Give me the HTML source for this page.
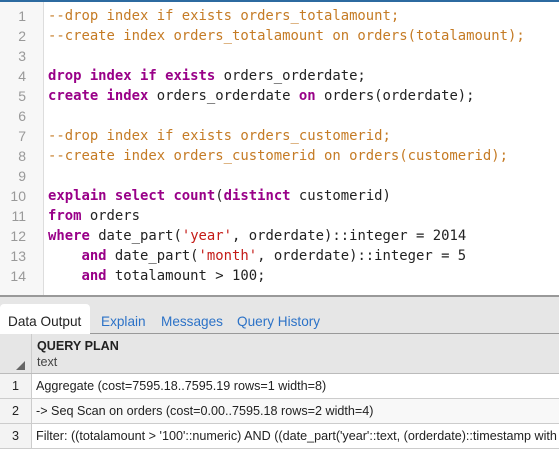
<!DOCTYPE html>
<html><head><style>
body{margin:0;width:559px;height:450px;overflow:hidden;background:#fff;position:relative;font-family:"Liberation Sans",sans-serif}
.top{position:absolute;left:0;top:0;width:559px;height:2px;background:#2c6aa0}
.gut{position:absolute;left:0;top:2px;width:43px;height:293px;background:#f7f7f7;border-right:1px solid #ddd}
.code{position:absolute;left:0;top:6px;font-family:"DejaVu Sans Mono",monospace;font-size:13.9px}
.code div{height:20px;line-height:20px;overflow:hidden;white-space:pre}
.ln{display:inline-block;width:26px;text-align:right;color:#999;margin-right:22px;font-family:"Liberation Sans",sans-serif;font-size:14px;vertical-align:top}
.c{color:#c57b25}.k{color:#990088;font-weight:bold}.s{color:#c41a16}.t{color:#222}
.band{position:absolute;left:0;top:295px;width:559px;height:39px;background:#e6e6e6;border-top:2px solid #999;box-sizing:border-box;border-bottom:1px solid #999}
.tab{position:absolute;top:314px;font-size:13.6px;color:#2c72c7}
.tab0{position:absolute;left:0;top:304px;width:90px;height:30px;background:#fff;border-radius:4px 4px 0 0}
.hdr{position:absolute;left:0;top:334px;width:559px;height:40px;background:#e6e6e6;border-bottom:1px solid #bbb;box-sizing:border-box}
.row{position:absolute;left:0;width:559px;height:25px;border-bottom:1px solid #ccc;box-sizing:border-box;font-size:12.6px;color:#222}
.num{position:absolute;left:0;top:0;width:31px;height:100%;background:#f3f3f3;border-right:1px solid #ccc;text-align:center;line-height:24px}
.txt{position:absolute;left:36px;top:0;line-height:24px;white-space:nowrap}
</style></head><body>
<div class="top"></div><div class="gut"></div>
<div class="code"><div><span class="ln">1</span><span class="c">--drop index if exists orders_totalamount;</span></div>
<div><span class="ln">2</span><span class="c">--create index orders_totalamount on orders(totalamount);</span></div>
<div><span class="ln">3</span></div>
<div><span class="ln">4</span><span class="k">drop index if exists</span><span class="t"> orders_orderdate;</span></div>
<div><span class="ln">5</span><span class="k">create index</span><span class="t"> orders_orderdate </span><span class="k">on</span><span class="t"> orders(orderdate);</span></div>
<div><span class="ln">6</span></div>
<div><span class="ln">7</span><span class="c">--drop index if exists orders_customerid;</span></div>
<div><span class="ln">8</span><span class="c">--create index orders_customerid on orders(customerid);</span></div>
<div><span class="ln">9</span></div>
<div><span class="ln">10</span><span class="k">explain select count</span><span class="t">(</span><span class="k">distinct</span><span class="t"> customerid)</span></div>
<div><span class="ln">11</span><span class="k">from</span><span class="t"> orders</span></div>
<div><span class="ln">12</span><span class="k">where</span><span class="t"> date_part(</span><span class="s">'year'</span><span class="t">, orderdate)::integer = 2014</span></div>
<div><span class="ln">13</span><span class="t">    </span><span class="k">and</span><span class="t"> date_part(</span><span class="s">'month'</span><span class="t">, orderdate)::integer = 5</span></div>
<div><span class="ln">14</span><span class="t">    </span><span class="k">and</span><span class="t"> totalamount &gt; 100;</span></div></div>
<div class="band"></div>
<div class="tab0"></div>
<div class="tab" style="left:8px;color:#222">Data Output</div>
<div class="tab" style="left:101px">Explain</div>
<div class="tab" style="left:161px">Messages</div>
<div class="tab" style="left:237px">Query History</div>
<div class="hdr"><div style="position:absolute;left:0;top:0;width:31px;height:39px;border-right:1px solid #ccc"></div>
<div style="position:absolute;left:16px;top:27px;width:0;height:0;border-left:9px solid transparent;border-bottom:9px solid #666"></div>
<div style="position:absolute;left:37px;top:5px;font-size:12.6px;font-weight:bold;color:#222">QUERY PLAN</div>
<div style="position:absolute;left:37px;top:21px;font-size:12.6px;color:#444">text</div></div>
<div class="row" style="top:374px;background:#fff"><div class="num">1</div><div class="txt">Aggregate (cost=7595.18..7595.19 rows=1 width=8)</div></div>
<div class="row" style="top:399px;background:#f8f8f8"><div class="num">2</div><div class="txt">-&gt; Seq Scan on orders (cost=0.00..7595.18 rows=2 width=4)</div></div>
<div class="row" style="top:424px;background:#fff"><div class="num">3</div><div class="txt">Filter: ((totalamount &gt; '100'::numeric) AND ((date_part('year'::text, (orderdate)::timestamp with</div></div>
</body></html>
